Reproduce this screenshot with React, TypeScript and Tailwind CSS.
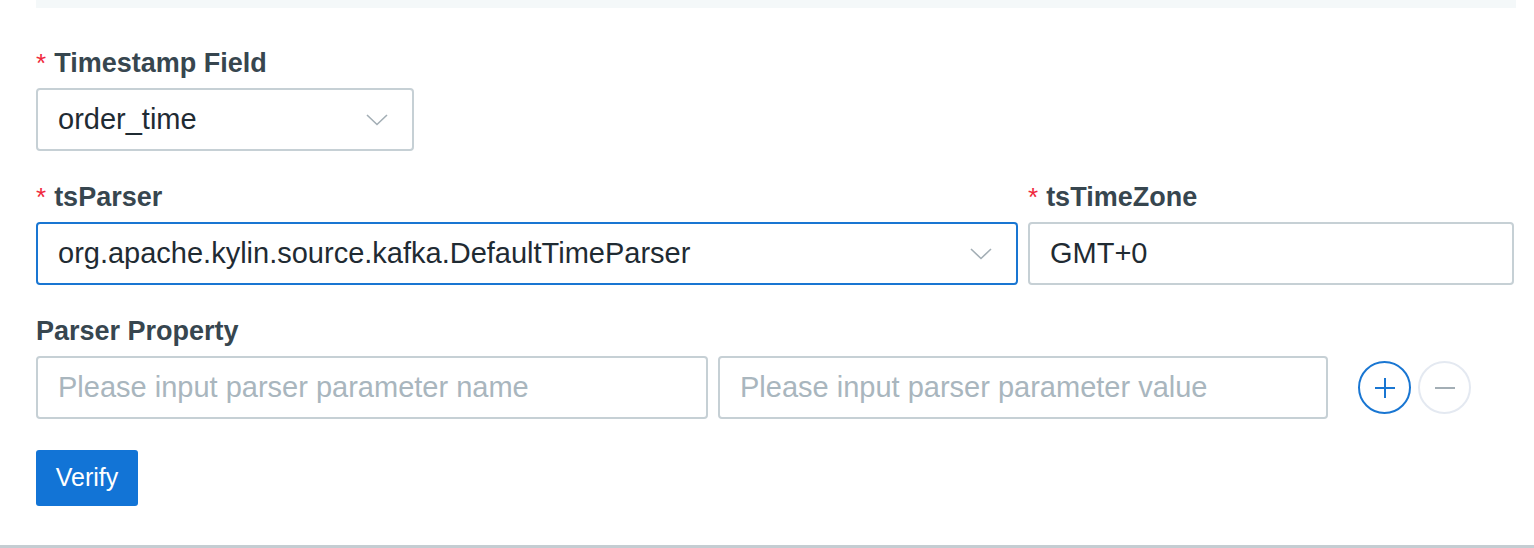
const font = { fontFamily: '"Liberation Sans", Arial, sans-serif' }

function Label({ text, required }: { text: string; required?: boolean }) {
  return (
    <div className="h-[36px] mb-[7px] leading-[36px] text-[27px] font-bold text-[#37464f] whitespace-nowrap">
      {required && <span className="text-[#f0283c] font-normal text-[26px] mr-[8px]">*</span>}
      {text}
    </div>
  )
}

function Chevron() {
  return (
    <svg width="22" height="12" viewBox="0 0 22 12" className="shrink-0">
      <path d="M1 1 L11 10.5 L21 1" fill="none" stroke="#a3aeb5" strokeWidth="1.6" />
    </svg>
  )
}

function SelectBox({ value, focused, className }: { value: string; focused?: boolean; className: string }) {
  return (
    <div
      className={
        'h-[63px] rounded-[4px] border-2 bg-white flex items-center justify-between pl-[20px] pr-[24px] ' +
        (focused ? 'border-[#1976d2] ' : 'border-[#c6d0d5] ') +
        className
      }
    >
      <span className="text-[29px] text-[#1f2b33] whitespace-nowrap pt-[1px]">{value}</span>
      <Chevron />
    </div>
  )
}

function TextBox({ value, placeholder, className }: { value?: string; placeholder?: string; className: string }) {
  return (
    <div
      className={
        'h-[63px] rounded-[4px] border-2 border-[#c6d0d5] bg-white flex items-center pl-[20px] ' + className
      }
    >
      {value ? (
        <span className="text-[29px] text-[#1f2b33] whitespace-nowrap pt-[1px]">{value}</span>
      ) : (
        <span className="text-[29px] text-[#a9b6be] whitespace-nowrap pt-[1px]">{placeholder}</span>
      )}
    </div>
  )
}

export default function App() {
  return (
    <div className="w-[1534px] h-[548px] bg-white overflow-hidden flex flex-col" style={font}>
      <div className="ml-[36px] w-[1480px] h-[8px] bg-[#f4f8f9] shrink-0" />

      <div className="pl-[36px] pt-[37px] flex flex-col">
        <div>
          <Label text="Timestamp Field" required />
          <SelectBox value="order_time" className="w-[378px]" />
        </div>

        <div className="mt-[28px] flex gap-[10px]">
          <div>
            <Label text="tsParser" required />
            <SelectBox value="org.apache.kylin.source.kafka.DefaultTimeParser" focused className="w-[982px]" />
          </div>
          <div>
            <Label text="tsTimeZone" required />
            <TextBox value="GMT+0" className="w-[486px]" />
          </div>
        </div>

        <div className="mt-[28px]">
          <Label text="Parser Property" />
          <div className="flex items-center">
            <TextBox placeholder="Please input parser parameter name" className="w-[672px]" />
            <TextBox placeholder="Please input parser parameter value" className="w-[610px] ml-[10px]" />
            <button
              type="button"
              className="ml-[30px] w-[53px] h-[53px] rounded-full border-2 border-[#1976d2] bg-white flex items-center justify-center"
            >
              <svg width="22" height="22" viewBox="0 0 22 22">
                <path d="M11 1 V21 M1 11 H21" stroke="#1976d2" strokeWidth="2" />
              </svg>
            </button>
            <button
              type="button"
              className="ml-[7px] w-[53px] h-[53px] rounded-full border-2 border-[#e4e9f1] bg-white flex items-center justify-center"
            >
              <svg width="22" height="4" viewBox="0 0 22 4">
                <path d="M1 2 H21" stroke="#a3aeb5" strokeWidth="2" />
              </svg>
            </button>
          </div>
        </div>

        <button
          type="button"
          className="mt-[31px] w-[102px] h-[56px] rounded-[3px] bg-[#1274d6] text-white text-[25px] flex items-center justify-center"
        >
          Verify
        </button>
      </div>

      <div className="mt-auto h-[3px] bg-[#c4cdd2] shrink-0" />
    </div>
  )
}
